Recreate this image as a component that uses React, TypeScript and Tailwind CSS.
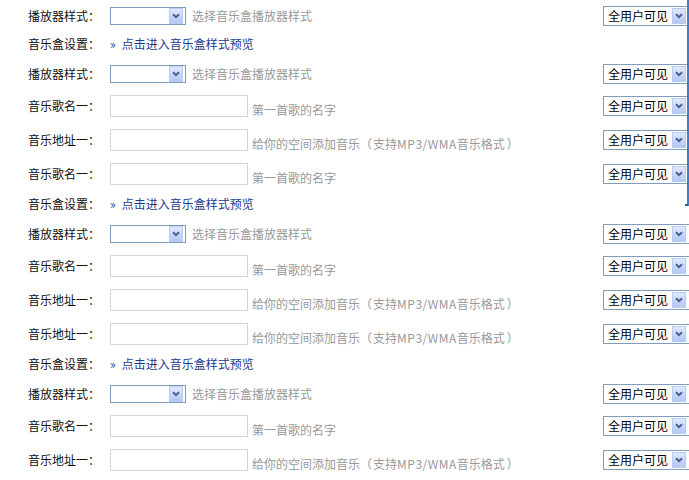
import React from "react";

type Row =
  | { t: "S"; label: string }
  | { t: "L"; label: string }
  | { t: "I"; label: string; hint: "song" | "addr" };

const rows: Row[] = [
  { t: "S", label: "播放器样式：" },
  { t: "L", label: "音乐盒设置：" },
  { t: "S", label: "播放器样式：" },
  { t: "I", label: "音乐歌名一：", hint: "song" },
  { t: "I", label: "音乐地址一：", hint: "addr" },
  { t: "I", label: "音乐歌名一：", hint: "song" },
  { t: "L", label: "音乐盒设置：" },
  { t: "S", label: "播放器样式：" },
  { t: "I", label: "音乐歌名一：", hint: "song" },
  { t: "I", label: "音乐地址一：", hint: "addr" },
  { t: "I", label: "音乐地址一：", hint: "addr" },
  { t: "L", label: "音乐盒设置：" },
  { t: "S", label: "播放器样式：" },
  { t: "I", label: "音乐歌名一：", hint: "song" },
  { t: "I", label: "音乐地址一：", hint: "addr" },
];

function DropBtn() {
  return (
    <div className="w-[14px] h-[16px] shrink-0 border border-[#b9cbf3] bg-gradient-to-b from-[#dfe8fd] to-[#b3c7f5] flex items-center justify-center">
      <svg width="10" height="8" viewBox="0 0 10 8">
        <path d="M2 2.2 L5 5.2 L8 2.2" fill="none" stroke="#4a5f8e" strokeWidth="2" />
      </svg>
    </div>
  );
}

function LeftSelect() {
  return (
    <div className="w-[76px] h-[18px] border border-[#7f9db9] bg-white flex items-center justify-end pr-[2px] shrink-0">
      <DropBtn />
    </div>
  );
}

function RightSelect() {
  return (
    <div className="w-[90px] h-[20px] border border-[#7f9db9] bg-white flex items-center shrink-0">
      <span className="pl-[4px] text-[12px] leading-none text-black w-[68px]">全用户可见</span>
      <DropBtn />
    </div>
  );
}

function Hint({ kind }: { kind: "song" | "addr" }) {
  if (kind === "song") {
    return <span className="ml-[4px] mt-[7px] text-[12px] leading-none text-[#999]">第一首歌的名字</span>;
  }
  return (
    <span className="ml-[4px] mt-[7px] text-[12px] leading-none text-[#999] whitespace-nowrap">
      给你的空间添加音乐<span className="mr-[1px]">（</span>支持
      <span className="tracking-[0.5px]">MP3/WMA</span>音乐格式<span className="ml-[2px]">）</span>
    </span>
  );
}

export default function App() {
  return (
    <div
      className="relative w-[689px] h-[480px] overflow-hidden bg-white pt-[1px]"
      style={{ fontFamily: '"Noto Sans CJK SC", "Noto Sans", sans-serif' }}
    >
      {rows.map((r, i) => (
        <div
          key={i}
          className={
            "w-[693px] pl-[28px] grid grid-cols-[82px_493px_90px] items-center " +
            (r.t === "S" ? "h-[30px]" : r.t === "I" ? "h-[34px]" : "h-[28px] pb-[2px]")
          }
        >
          <span className="text-[12px] leading-none text-[#111]">{r.label}</span>
          <div className="flex items-center">
            {r.t === "S" && (
              <>
                <LeftSelect />
                <span className="ml-[6px] text-[12px] leading-none text-[#999]">选择音乐盒播放器样式</span>
              </>
            )}
            {r.t === "L" && (
              <span className="text-[12px] leading-none text-[#1e3a8c] whitespace-nowrap">
                »<span className="ml-[6px]">点击进入音乐盒样式预览</span>
              </span>
            )}
            {r.t === "I" && (
              <>
                <div className="w-[138px] h-[22px] border border-[#d4d4d4] bg-white shrink-0" />
                <Hint kind={r.hint} />
              </>
            )}
          </div>
          <div className="flex items-center">{r.t !== "L" && <RightSelect />}</div>
        </div>
      ))}
      <div className="absolute top-0 left-[687px] w-[2px] h-[206px] bg-[#3c7fc6]" />
      <div className="absolute top-[204px] left-[685px] w-[3px] h-[2px] bg-[#2a5a9a]" />
    </div>
  );
}
